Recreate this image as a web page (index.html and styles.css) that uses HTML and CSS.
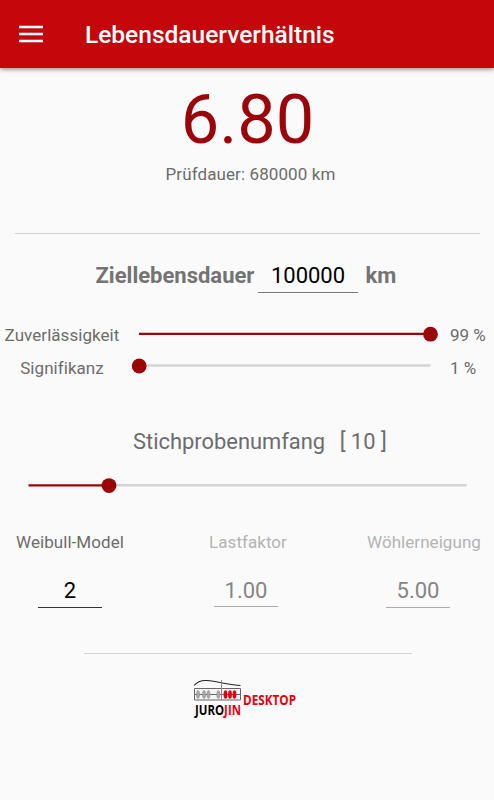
FILE: index.html
```html
<!DOCTYPE html>
<html lang="de">
<head>
<meta charset="utf-8">
<title>Lebensdauerverhältnis</title>
<link rel="stylesheet" href="styles.css">
</head>
<body>
<header class="bar">
  <svg class="menu" width="24" height="18" viewBox="0 0 24 18"><path d="M0 2h24M0 9h24M0 16h24" stroke="#fff" stroke-width="2.3"/></svg>
  <h1 class="title">Lebensdauerverhältnis</h1>
</header>
<main>
  <section class="result">
    <div class="ratio">6.80</div>
    <div class="duration">Prüfdauer: 680000 km</div>
  </section>
  <section class="target">
    <span class="target-label">Ziellebensdauer</span>
    <span class="target-value">100000</span>
    <span class="target-unit">km</span>
  </section>
  <section class="levels">
    <span class="level-name first">Zuverlässigkeit</span>
    <svg class="slider" width="308" height="16" viewBox="0 0 308 16"><path class="fill" d="M8 7.9h292"/><circle cx="299.5" cy="8.2" r="7.4"/></svg>
    <span class="level-value first">99 %</span>
    <span class="level-name">Signifikanz</span>
    <svg class="slider" width="308" height="16" viewBox="0 0 308 16"><path class="track" d="M8 7.6h291.5"/><circle cx="8.2" cy="8" r="7.4"/></svg>
    <span class="level-value">1 %</span>
  </section>
  <section class="sample">
    <div class="sample-label"><span>Stichprobenumfang</span><span class="sample-count">[ 10 ]</span></div>
    <svg class="sample-slider" width="454" height="16" viewBox="0 0 454 16"><path class="track" d="M88 8.3h358.5"/><path class="fill" d="M8.5 8.3h80"/><circle cx="89" cy="8.6" r="7.4"/></svg>
  </section>
  <section class="params">
    <div class="param"><span class="param-name">Weibull-Model</span><span class="param-value">2</span></div>
    <div class="param off mid"><span class="param-name">Lastfaktor</span><span class="param-value">1.00</span></div>
    <div class="param off last"><span class="param-name">Wöhlerneigung</span><span class="param-value">5.00</span></div>
  </section>
  <footer class="brand">
    <svg width="120" height="48" viewBox="0 0 120 48">
      <path d="M2 7.500C5 4 8 2 15 2.500C26 3.500 38 7 48.500 7.500" fill="none" stroke="#222" stroke-width="1.1"/>
      <path d="M2.500 10.500h46v11.500h-46z" fill="#f5f5f5" stroke="#666" stroke-width="1"/>
      <path d="M2 16.500h47" stroke="#666" stroke-width="1"/>
      <path d="M29.500 2v20" stroke="#888" stroke-width="1"/>
      <g fill="#aaa" stroke="#888" stroke-width=".6"><ellipse cx="6" cy="16.500" rx="1.500" ry="4"/><ellipse cx="12" cy="16.500" rx="1.500" ry="4"/><ellipse cx="16.500" cy="16.500" rx="1.500" ry="4"/><ellipse cx="26.300" cy="16.500" rx="1.500" ry="4"/></g>
      <g fill="#e8000f"><ellipse cx="33.500" cy="16.500" rx="1.900" ry="4.300"/><ellipse cx="38" cy="16.500" rx="1.900" ry="4.300"/><ellipse cx="42.500" cy="16.500" rx="1.900" ry="4.300"/></g>
      <text class="logo" x="3" y="37" textLength="46" lengthAdjust="spacingAndGlyphs">JURO<tspan class="red">JIN</tspan></text>
      <text class="logo red desk" x="51" y="27" textLength="53" lengthAdjust="spacingAndGlyphs">DESKTOP</text>
    </svg>
  </footer>
</main>
</body>
</html>
```
FILE: styles.css
```css
* { box-sizing: border-box; }
body {
  margin: 0;
  width: 494px;
  height: 800px;
  background: #fafafa;
  color: #6c6c6c;
  font: 17px/20px Roboto, sans-serif;
  overflow: hidden;
}
svg { display: block; }
.bar {
  height: 68px;
  background: #c3070b;
  box-shadow: 0 1px 5px rgba(0, 0, 0, .5);
  display: flex;
  align-items: center;
  padding: 0 19px;
  gap: 42px;
}
.title {
  margin: 2px 0 0;
  color: #fff;
  font-size: 24.5px;
  line-height: 30px;
  font-weight: 500;
}
.result {
  height: 166px;
  margin: 0 14px 0 15px;
  padding-top: 12px;
  border-bottom: 1px solid #d2d2d2;
  text-align: center;
}
.ratio {
  height: 80px;
  color: #9b050a;
  font-size: 68.5px;
  line-height: 80px;
}
.duration { margin-top: 4px; padding-left: 6px; letter-spacing: .1px; }
.target {
  display: flex;
  height: 91px;
  padding: 26px 0 0 95.5px;
  font-size: 22px;
  line-height: 32px;
}
.target-label, .target-unit { font-weight: 700; color: #737373; }
.target-label { width: 162.5px; }
.target-value {
  width: 100px;
  height: 33px;
  border-bottom: 1px solid #777;
  text-align: center;
  color: #000;
}
.target-unit { margin-left: 7.5px; }
.levels {
  display: grid;
  grid-template-columns: 124px 308px 1fr;
  grid-template-rows: 20px 20px;
  column-gap: 7px;
  row-gap: 12px;
}
.level-name { text-align: center; padding-top: 1px; letter-spacing: .05px; }
.level-value { padding: 1px 0 0 4px; }
.level-name.first, .level-value.first { padding-top: 0; }
.slider { margin-top: 1px; }
.fill { stroke: #9b050a; stroke-width: 2.3; }
.track { stroke: #d4d4d4; stroke-width: 2.5; }
circle { fill: #9b050a; }
.sample { padding-top: 51px; }
.sample-label {
  display: flex;
  padding-left: 133px;
  gap: 14.5px;
  font-size: 21.9px;
  line-height: 28px;
}
.sample-slider { margin: 21px 0 0 20px; }
.params {
  display: grid;
  grid-template-columns: 110px 110px 116px;
  justify-content: space-between;
  margin: 39px 12px 0 15px;
  height: 76px;
}
.param { display: flex; flex-direction: column; align-items: center; }
.param-name { height: 20px; letter-spacing: .05px; }
.param-value {
  width: 64px;
  height: 32px;
  margin-top: 24px;
  border-bottom: 1px solid #333;
  color: #000;
  font-size: 22px;
  line-height: 30px;
  text-align: center;
}
.off .param-name { color: #b3b3b3; }
.off .param-value { color: #858585; border-color: #aaa; }
.mid { padding-left: 5px; }
.mid .param-value { height: 31px; line-height: 29px; margin-right: 4px; }
.last .param-value { margin-right: 12px; }
.brand {
  width: 328px;
  margin: 45px 0 0 84px;
  border-top: 1px solid #d2d2d2;
  padding: 24px 0 0 108px;
}
.logo { font: 700 14px "Open Sans", sans-serif; fill: #000; }
.red { fill: #e8000f; }
.desk { font-size: 15px; fill: #e8000f; }
```
